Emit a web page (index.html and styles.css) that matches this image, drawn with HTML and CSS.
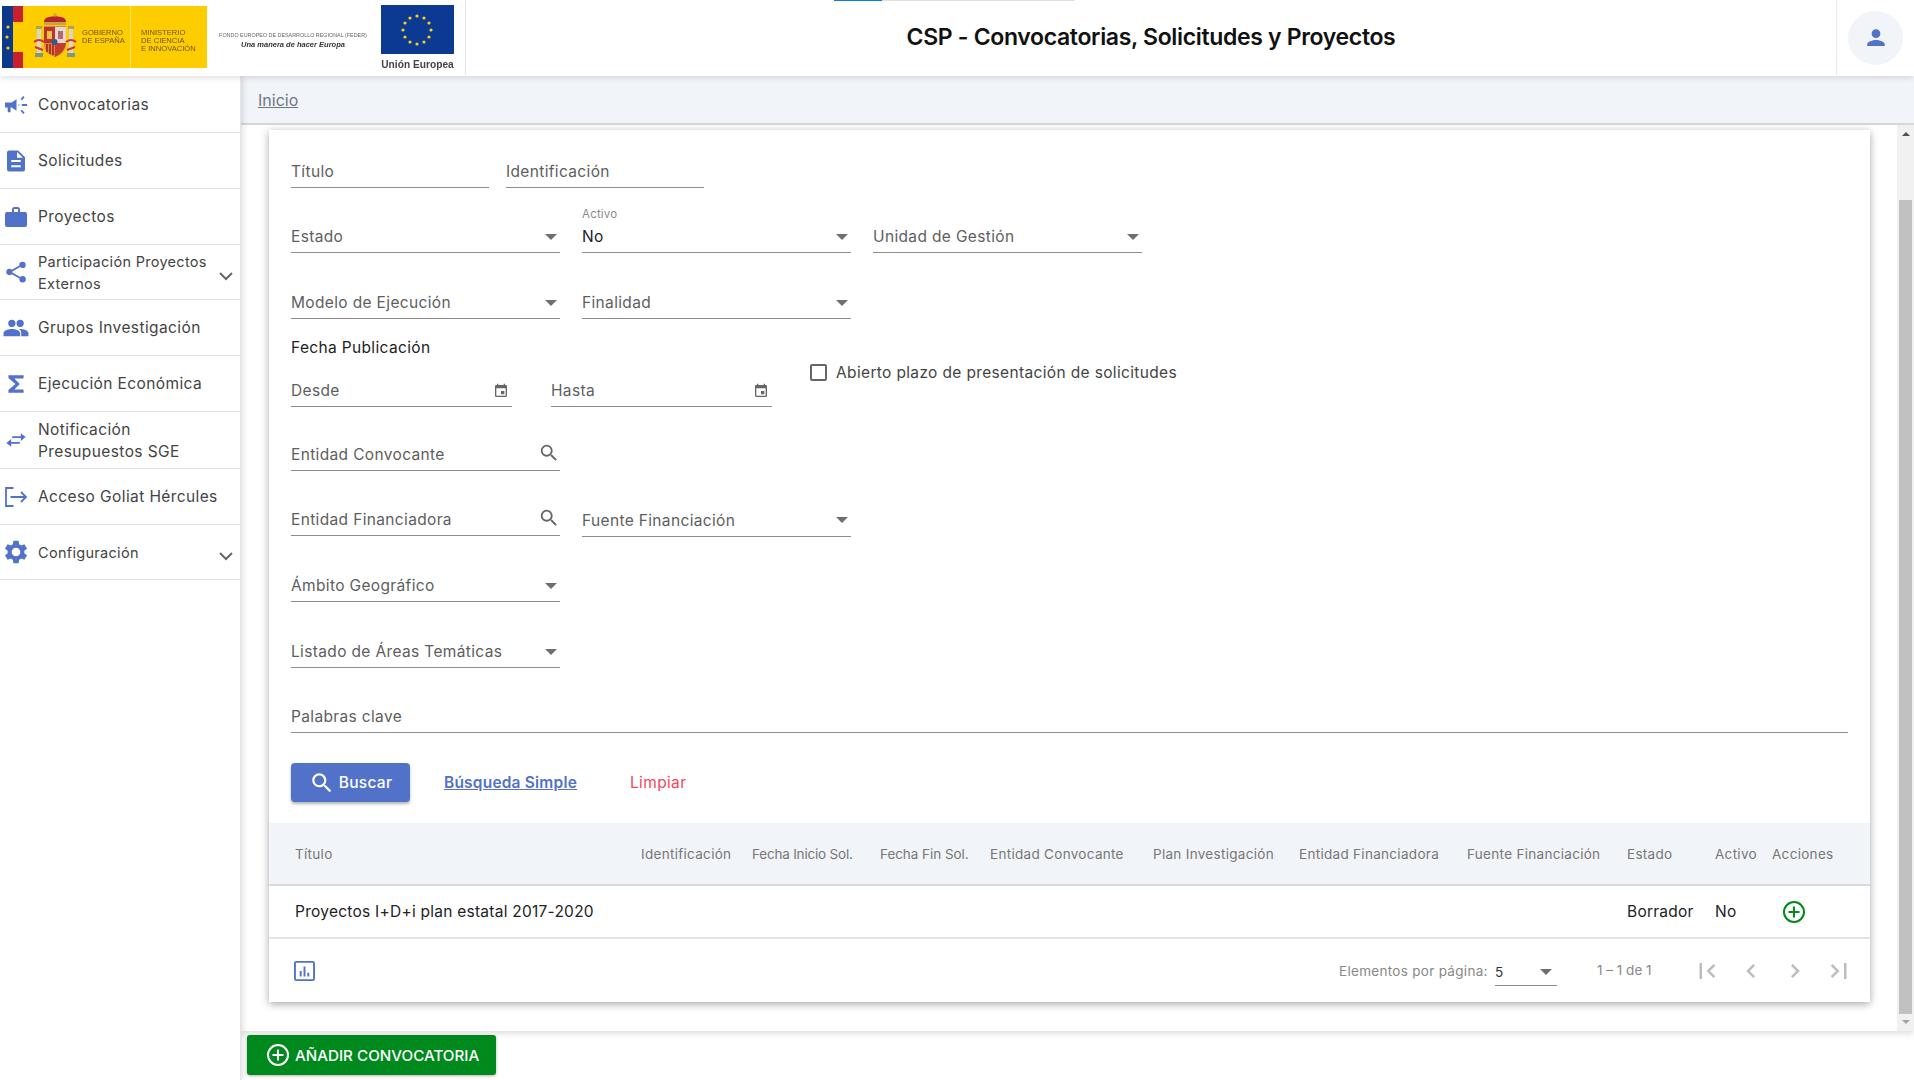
FILE: index.html
```html
<!DOCTYPE html>
<html lang="es">
<head>
<meta charset="utf-8">
<title>CSP</title>
<link rel="stylesheet" href="styles.css">
</head>
<body>
<header class="topbar">
  <div class="progress"><span class="progress-fill"></span></div>
  <div class="logos">
    <svg class="logo-svg" width="465" height="75" viewBox="0 0 465 75">
      <rect x="2" y="6" width="205" height="62" fill="#fecd00"/>
      <rect x="2" y="6" width="11" height="62" fill="#0b3a8c"/>
      <rect x="13" y="6" width="10" height="16" fill="#c8202c"/>
      <rect x="13" y="52" width="10" height="16" fill="#c8202c"/>
      <circle cx="8" cy="27" r="1.6" fill="#fecd00"/><circle cx="7" cy="37" r="1.6" fill="#fecd00"/><circle cx="8" cy="48" r="1.6" fill="#fecd00"/>
      <rect x="130" y="6" width="1" height="62" fill="#ffe271"/>
      <rect x="37" y="29" width="4" height="24" fill="#d5d8cf"/><rect x="69" y="29" width="4" height="24" fill="#d5d8cf"/>
      <rect x="36" y="26" width="6" height="3" fill="#b9a04e"/><rect x="68" y="26" width="6" height="3" fill="#b9a04e"/>
      <rect x="35" y="53" width="8" height="4" fill="#7f9a7a"/><rect x="67" y="53" width="8" height="4" fill="#7f9a7a"/>
      <path d="M44 24q-1-6 5-7l6-1 6 1q6 1 5 7z" fill="#b3262b"/>
      <rect x="44" y="22" width="22" height="3" fill="#c9a24a"/>
      <circle cx="55" cy="15" r="1.800" fill="#c9a24a"/>
      <path d="M44 26h22v19q-1 9-11 12-10-3-11-12z" fill="#d08a3a"/>
      <rect x="55" y="27" width="11" height="16" fill="#e6d6d0"/>
      <rect x="44" y="27" width="11" height="16" fill="#c2322c"/>
      <rect x="47" y="31" width="5" height="8" fill="#e8c24a"/>
      <rect x="58" y="31" width="5" height="8" fill="#b06a70"/>
      <path d="M55 43h11q-1 9-11 14z" fill="#c43c2e"/>
      <path d="M46 44h2v8h-2zm3 0h2v10h-2zm3 0h2v11h-2z" fill="#b8322a"/>
      <circle cx="54.500" cy="42" r="3" fill="#2c5b9c"/>
      <path d="M34 42q5-4 10 0M66 42q5-4 10 0M35 47l8 3M67 50l8-3" stroke="#d2343a" stroke-width="2" fill="none"/>
      <text class="lg-gov" x="82" y="35">GOBIERNO</text>
      <text class="lg-gov" x="82" y="43">DE ESPAÑA</text>
      <text class="lg-gov" x="141" y="35">MINISTERIO</text>
      <text class="lg-gov" x="141" y="43">DE CIENCIA</text>
      <text class="lg-gov" x="141" y="51">E INNOVACIÓN</text>
      <text class="lg-feder" x="293" y="37" text-anchor="middle">FONDO EUROPEO DE DESARROLLO REGIONAL (FEDER)</text>
      <text class="lg-una" x="293" y="47" text-anchor="middle">Una manera de hacer Europa</text>
      <rect x="381" y="5" width="73" height="49" fill="#0c3a92"/>
      <g fill="#f6d21a">
        <circle cx="417" cy="16" r="1.6"/><circle cx="424" cy="18" r="1.6"/><circle cx="429" cy="23" r="1.6"/><circle cx="431" cy="30" r="1.6"/><circle cx="429" cy="37" r="1.6"/><circle cx="424" cy="42" r="1.6"/><circle cx="417" cy="44" r="1.6"/><circle cx="410" cy="42" r="1.6"/><circle cx="405" cy="37" r="1.6"/><circle cx="403" cy="30" r="1.6"/><circle cx="405" cy="23" r="1.6"/><circle cx="410" cy="18" r="1.6"/>
      </g>
      <text class="lg-ue" x="417.5" y="68" text-anchor="middle">Unión Europea</text>
    </svg>
  </div>
  <h1 class="app-title">CSP - Convocatorias, Solicitudes y Proyectos</h1>
  <div class="user-box">
    <span class="avatar">
      <svg width="24" height="24" viewBox="0 0 24 24"><path fill="#5271c9" d="M12 12a4.400 4.400 0 1 0 0-8.800 4.400 4.400 0 0 0 0 8.800zm0 2c-3.200 0-8.800 1.600-8.800 4.500V20h17.600v-1.500c0-2.900-5.600-4.500-8.800-4.500z"/></svg>
    </span>
  </div>
</header>

<div class="shell">
  <nav class="sidebar">
    <a class="nav-item h56">
      <svg class="nav-ico" viewBox="0.1 -0.4 24.8 24.8"><path d="M2 9.500v5h2.500l.2 4.500h2.600v-4.500h1l4.700 3V6.500l-4.700 3z"/><path class="thin" d="M15 12h.6M18 12h5M17.500 7l2.500-3M17.500 17l2.500 3"/></svg>
      <span class="nav-text">Convocatorias</span>
    </a>
    <a class="nav-item h56">
      <svg class="nav-ico" viewBox="-0.25 -0.25 24.5 24.5"><path d="M14 2H5.500a2 2 0 0 0-2 2v16a2 2 0 0 0 2 2h13a2 2 0 0 0 2-2V8.500zm2.500 16h-9v-2h9zm0-5h-9v-2h9zM13 9V3.500L18.500 9z"/></svg>
      <span class="nav-text">Solicitudes</span>
    </a>
    <a class="nav-item h56">
      <svg class="nav-ico" viewBox="-1 -1 26 26"><path d="M21 7h-5V4.500A2.500 2.500 0 0 0 13.500 2h-3A2.500 2.500 0 0 0 8 4.500V7H3a2 2 0 0 0-2 2v11a2 2 0 0 0 2 2h18a2 2 0 0 0 2-2V9a2 2 0 0 0-2-2zm-7 0h-4V4h4z"/></svg>
      <span class="nav-text">Proyectos</span>
    </a>
    <a class="nav-item h55 expandable">
      <svg class="nav-ico" viewBox="-1 -1 26 26"><path d="M18.500 16c-.9 0-1.700.3-2.300.9L8.400 12.600c.1-.2.100-.4.100-.6s0-.4-.1-.6l7.700-4.300c.6.600 1.500 1 2.400 1a3.200 3.200 0 1 0-3.200-3.200c0 .2 0 .4.100.6L7.700 9.800A3.200 3.200 0 1 0 5.300 15.200c.9 0 1.800-.4 2.400-1l7.800 4.400c-.1.200-.1.400-.1.600a3.200 3.200 0 1 0 3.100-3.200z"/></svg>
      <span class="nav-text">Participación Proyectos Externos</span>
      <svg class="nav-chev" width="16" height="16" viewBox="0 0 16 16"><path d="M2 5l6 6 6-6" fill="none" stroke="#666" stroke-width="2"/></svg>
    </a>
    <a class="nav-item h56">
      <svg class="nav-ico" viewBox="-0.5 -0.5 25 25"><path d="M16 11a3.500 3.500 0 1 0 0-7 3.500 3.500 0 0 0 0 7zm-8 0a3.500 3.500 0 1 0 0-7 3.500 3.500 0 0 0 0 7zm0 2c-2.700 0-8 1.300-8 4v3h16v-3c0-2.700-5.300-4-8-4zm8 0h-1c1.200.9 2 2.100 2 4v3h7v-3c0-2.700-5.300-4-8-4z"/></svg>
      <span class="nav-text">Grupos Investigación</span>
    </a>
    <a class="nav-item h56">
      <svg class="nav-ico" viewBox="0 0 24 24"><path d="M19 4H5v2.500l6.500 5.500L5 17.500V20h14v-3h-8.500l5-5-5-5H19z"/></svg>
      <span class="nav-text">Ejecución Económica</span>
    </a>
    <a class="nav-item h57">
      <svg class="nav-ico" viewBox="-1.5 -1.5 27 27"><path d="M7 11l-5 4 5 4v-3h9v-2H7zM22 9l-5-4v3H8v2h9v3z"/></svg>
      <span class="nav-text">Notificación Presupuestos SGE</span>
    </a>
    <a class="nav-item h56">
      <svg class="nav-ico" viewBox="-0.5 -1 26 26"><path class="thin" d="M10 3H2.500v18H10M7 12h15M17.500 7l5 5-5 5"/></svg>
      <span class="nav-text">Acceso Goliat Hércules</span>
    </a>
    <a class="nav-item h55 expandable">
      <svg class="nav-ico" viewBox="2.200 1.500 21 21"><path d="M19.400 13a7.600 7.600 0 0 0 0-2l2.200-1.700-2.100-3.600-2.600 1a7.500 7.500 0 0 0-1.700-1L14.800 3h-4.200l-.4 2.700a7.500 7.500 0 0 0-1.700 1l-2.600-1-2.100 3.600L6 11a7.600 7.600 0 0 0 0 2l-2.200 1.700 2.100 3.600 2.600-1c.5.400 1.100.7 1.700 1l.4 2.700h4.200l.4-2.700c.6-.3 1.200-.6 1.700-1l2.600 1 2.100-3.600zM12.700 15.500a3.500 3.500 0 1 1 0-7 3.500 3.500 0 0 1 0 7z"/></svg>
      <span class="nav-text">Configuración</span>
      <svg class="nav-chev" width="16" height="16" viewBox="0 0 16 16"><path d="M2 5l6 6 6-6" fill="none" stroke="#666" stroke-width="2"/></svg>
    </a>
  </nav>

  <div class="content">
    <div class="crumbs"><a class="crumb-link">Inicio</a></div>
    <div class="scroller">
      <main class="scroll-body">
        <section class="card">
          <form class="filters">
            <div class="row gap17 first">
              <div class="field w198"><span class="ph">Título</span></div>
              <div class="field w198"><span class="ph">Identificación</span></div>
            </div>
            <div class="row">
              <div class="field w269 sel"><span class="ph">Estado</span><i class="caret"></i></div>
              <div class="field w269 sel"><span class="float">Activo</span><span class="val">No</span><i class="caret"></i></div>
              <div class="field w269 sel"><span class="ph">Unidad de Gestión</span><i class="caret"></i></div>
            </div>
            <div class="row m31">
              <div class="field w269 sel"><span class="ph">Modelo de Ejecución</span><i class="caret"></i></div>
              <div class="field w269 sel"><span class="ph">Finalidad</span><i class="caret"></i></div>
            </div>
            <div class="row date-row">
              <div class="date-col">
                <div class="group-label">Fecha Publicación</div>
                <div class="date-fields">
                  <div class="field w221"><span class="ph">Desde</span>
                    <svg class="cal" width="16" height="16" viewBox="0 0 24 24"><path fill="#666" d="M17 12h-5v5h5zM16 1v2H8V1H6v2H5a2 2 0 0 0-2 2v14a2 2 0 0 0 2 2h14a2 2 0 0 0 2-2V5a2 2 0 0 0-2-2h-1V1zm3 18H5V8h14z"/></svg>
                  </div>
                  <div class="field w221"><span class="ph">Hasta</span>
                    <svg class="cal" width="16" height="16" viewBox="0 0 24 24"><path fill="#666" d="M17 12h-5v5h5zM16 1v2H8V1H6v2H5a2 2 0 0 0-2 2v14a2 2 0 0 0 2 2h14a2 2 0 0 0 2-2V5a2 2 0 0 0-2-2h-1V1zm3 18H5V8h14z"/></svg>
                  </div>
                </div>
              </div>
              <label class="check"><span class="box"></span><span>Abierto plazo de presentación de solicitudes</span></label>
            </div>
            <div class="row m29">
              <div class="field w269"><span class="ph">Entidad Convocante</span>
                <svg class="mag" width="22" height="22" viewBox="0 0 24 24"><path fill="#666" d="M15.500 14h-.79l-.28-.27A6.470 6.470 0 0 0 16 9.500 6.500 6.500 0 1 0 9.500 16c1.610 0 3.090-.59 4.230-1.570l.27.28v.79l5 4.990L20.490 19l-4.990-5zm-6 0C7.010 14 5 11.990 5 9.500S7.010 5 9.500 5 14 7.010 14 9.500 11.990 14 9.500 14z"/></svg>
              </div>
            </div>
            <div class="row">
              <div class="field w269"><span class="ph">Entidad Financiadora</span>
                <svg class="mag" width="22" height="22" viewBox="0 0 24 24"><path fill="#666" d="M15.500 14h-.79l-.28-.27A6.470 6.470 0 0 0 16 9.500 6.500 6.500 0 1 0 9.500 16c1.610 0 3.090-.59 4.230-1.570l.27.28v.79l5 4.990L20.490 19l-4.990-5zm-6 0C7.010 14 5 11.990 5 9.500S7.010 5 9.500 5 14 7.010 14 9.500 11.990 14 9.500 14z"/></svg>
              </div>
              <div class="field w269 sel fuente"><span class="ph">Fuente Financiación</span><i class="caret"></i></div>
            </div>
            <div class="row">
              <div class="field w269 sel"><span class="ph">Ámbito Geográfico</span><i class="caret"></i></div>
            </div>
            <div class="row m31">
              <div class="field w269 sel"><span class="ph">Listado de Áreas Temáticas</span><i class="caret"></i></div>
            </div>
            <div class="row">
              <div class="field wfull"><span class="ph">Palabras clave</span></div>
            </div>
            <div class="actions">
              <button class="btn-search" type="button">
                <svg width="26" height="26" viewBox="0 0 24 24"><path fill="#fff" d="M15.500 14h-.79l-.28-.27A6.470 6.470 0 0 0 16 9.500 6.500 6.500 0 1 0 9.500 16c1.610 0 3.090-.59 4.230-1.570l.27.28v.79l5 4.990L20.490 19l-4.990-5zm-6 0C7.010 14 5 11.990 5 9.500S7.010 5 9.500 5 14 7.010 14 9.500 11.990 14 9.500 14z"/></svg>
                <span>Buscar</span>
              </button>
              <a class="link-simple">Búsqueda Simple</a>
              <a class="link-clear">Limpiar</a>
            </div>
          </form>
          <div class="thead tgrid">
            <span>Título</span><span>Identificación</span><span class="tight-a">Fecha Inicio Sol.</span><span class="tight-b">Fecha Fin Sol.</span><span>Entidad Convocante</span><span>Plan Investigación</span><span>Entidad Financiadora</span><span>Fuente Financiación</span><span>Estado</span><span>Activo</span><span>Acciones</span>
          </div>
          <div class="trow tgrid">
            <span>Proyectos I+D+i plan estatal 2017-2020</span><span></span><span></span><span></span><span></span><span></span><span></span><span></span><span>Borrador</span><span>No</span>
            <span class="act"><svg width="24" height="24" viewBox="0 0 24 24"><circle cx="12" cy="12" r="10" fill="none" stroke="#008a1e" stroke-width="2"/><path d="M12 6.500v11M6.500 12h11" stroke="#008a1e" stroke-width="2"/></svg></span>
          </div>
          <div class="tfoot">
            <svg class="chart" width="21" height="20" viewBox="0 0 22 22" preserveAspectRatio="none"><rect x="1" y="1" width="20" height="20" rx="1.500" fill="none" stroke="#5271c9" stroke-width="2"/><path d="M6 11v6h2v-6zM10 6v11h2V6zM14 13v4h2v-4z" fill="#5271c9"/></svg>
            <div class="pager">
              <span class="pg-label">Elementos por página:</span>
              <div class="pg-select"><span>5</span><i class="caret"></i></div>
              <span class="pg-range">1 – 1 de 1</span>
              <svg class="pg-btn" width="24" height="24" viewBox="0 0 24 24"><path d="M4.500 4h2.500v16H4.500zM18.500 5l1.800 1.800L15 12l5.300 5.200-1.800 1.800-7-7z"/></svg>
              <svg class="pg-btn" width="24" height="24" viewBox="0 0 24 24"><path d="M16 6.800 14.200 5l-7 7 7 7 1.800-1.800L10.800 12z"/></svg>
              <svg class="pg-btn" width="24" height="24" viewBox="0 0 24 24"><path d="M8 6.800 9.800 5l7 7-7 7L8 17.200 13.200 12z"/></svg>
              <svg class="pg-btn" width="24" height="24" viewBox="0 0 24 24"><path d="M19.500 4H17v16h2.500zM5.500 5 3.700 6.800 9 12l-5.300 5.200L5.500 19l7-7z"/></svg>
            </div>
          </div>
        </section>
      </main>
      <div class="scrollbar">
        <i class="sb-up"></i>
        <div class="sb-track"><div class="sb-thumb"></div></div>
        <i class="sb-down"></i>
      </div>
    </div>
    <div class="bottom-bar">
      <button class="btn-add" type="button">
        <svg width="24" height="24" viewBox="0 0 24 24"><circle cx="12" cy="12" r="10" fill="none" stroke="#fff" stroke-width="2"/><path d="M12 6.500v11M6.500 12h11" stroke="#fff" stroke-width="2"/></svg>
        <span>AÑADIR CONVOCATORIA</span>
      </button>
    </div>
  </div>
</div>
</body>
</html>
```

FILE: styles.css
```css
* { box-sizing: border-box; }
html, body { margin: 0; padding: 0; height: 100%; overflow: hidden; }
body { font-family: Inter, "Open Sans", sans-serif; color: #333; background: #fff; width: 1914px; height: 1080px; }

.topbar { position: relative; height: 76px; display: flex; align-items: flex-start; background: #fff; box-shadow: 0 2px 6px rgba(0,0,0,.12); z-index: 3; }
.progress { position: absolute; left: 834px; top: 0; width: 241px; height: 1px; background: #e0e0e0; }
.progress-fill { position: absolute; left: 0; top: 0; width: 48px; height: 1px; background: #0a7be0; }
.logos { width: 466px; border-right: 1px solid #e8e8e8; height: 75px; flex: none; }
.logo-svg { display: block; filter: blur(.35px); }
.lg-gov { font: 500 7.600px "Liberation Sans", sans-serif; fill: #6b5410; }
.lg-feder { font: 400 5.400px "Liberation Sans", sans-serif; fill: #666; }
.lg-una { font: italic 700 7.500px "Liberation Sans", sans-serif; fill: #333; }
.lg-ue { font: 700 10.200px "Liberation Sans", sans-serif; fill: #444; }
.app-title { flex: 1; margin: 0; text-align: center; font-size: 23px; font-weight: 600; color: #111; line-height: 74px; letter-spacing: -.33px; }
.user-box { width: 78px; flex: none; border-left: 1px solid #e8e8e8; height: 75px; display: flex; align-items: center; justify-content: center; }
.avatar { width: 55px; height: 54px; border-radius: 50%; background: #f1f4f8; display: flex; align-items: center; justify-content: center; }

.shell { display: flex; height: 1004px; }
.sidebar { width: 241px; flex: none; background: #fff; border-right: 1px solid #e4e4e4; box-shadow: 2px 0 6px rgba(0,0,0,.12); z-index: 2; padding-top: 1px; }
.nav-item { display: flex; align-items: center; border-bottom: 1px solid #e0e0e0; padding-left: 3px; padding-right: 5px; font-size: 15.5px; line-height: 22px; color: #444; letter-spacing: .4px; }
.nav-item.expandable { font-size: 14.5px; letter-spacing: .3px; }
.h55 { height: 55px; }
.h56 { height: 56px; }
.h57 { height: 57px; }
.nav-ico { flex: none; fill: #5271c9; width: 26px; height: 26px; margin-right: 9px; }
.nav-ico .thin { fill: none; stroke: #5271c9; stroke-width: 1.800; }
.nav-text { flex: 1; min-width: 0; max-width: 186px; padding-top: 1px; }
.nav-chev { flex: none; margin-left: -6px; margin-top: 8px; }

.content { flex: 1; min-width: 0; display: flex; flex-direction: column; }
.crumbs { height: 49px; background: #f1f4f8; border-bottom: 2px solid #d8dade; padding: 14px 17px 0; font-size: 16px; color: #6f7787; flex: none; }
.crumb-link { text-decoration: underline; }
.scroller { height: 906px; flex: none; display: flex; background: #fff; box-shadow: 0 3px 6px rgba(0,0,0,.12); position: relative; z-index: 1; }
.scroll-body { flex: 1; min-width: 0; padding: 5px 27px 0 28px; }
.card { background: #fff; box-shadow: 0 2px 8px rgba(0,0,0,.35); height: 872px; }

.filters { padding: 23px 22px 21px; font-size: 15.5px; letter-spacing: .35px; display: flex; flex-direction: column; }
.row { display: flex; gap: 22px; margin-top: 30px; }
.row.first { margin-top: 0; }
.row.gap17 { gap: 17px; }
.row.m31 { margin-top: 31px; }
.row.m29 { margin-top: 29px; }
.date-row { margin-top: 20px; gap: 38px; align-items: center; }
.date-fields { display: flex; gap: 39px; margin-top: 15px; }
.group-label { font-size: 15.5px; color: #222; line-height: 18px; }
.field { position: relative; height: 35px; border-bottom: 1px solid #8c8c8c; display: flex; align-items: center; padding-top: 3px; color: #5c5c5c; }
.w198 { width: 198px; }
.w269 { width: 269px; }
.w221 { width: 221px; }
.wfull { width: 100%; }
.field.fuente { height: 36px; }
.ph { color: #5e5e5e; }
.val { color: #222; }
.float { position: absolute; left: 0; top: -11px; font-size: 11.5px; color: #8a8a8a; letter-spacing: .2px; }
.caret { width: 0; height: 0; border-left: 6px solid transparent; border-right: 6px solid transparent; border-top: 6px solid #6f6f6f; display: block; }
.sel .caret { position: absolute; right: 3px; top: 16px; }
.cal { position: absolute; right: 3px; top: 11px; }
.mag { position: absolute; right: 0; top: 6px; }
.check { display: flex; align-items: center; gap: 9px; color: #444; margin-top: -2px; }
.box { width: 17px; height: 17px; border: 2px solid #666; border-radius: 2px; display: block; flex: none; }

.actions { display: flex; align-items: center; height: 39px; margin-top: 30px; }
.btn-search { width: 119px; height: 39px; border: 0; border-radius: 4px; background: #5271c9; color: #fff; box-shadow: 0 2px 3px rgba(0,0,0,.3); font: 500 15.500px Inter, sans-serif; letter-spacing: .3px; display: flex; align-items: center; justify-content: center; gap: 4px; padding: 0; }
.link-simple { margin-left: 34px; width: 186px; color: #5271c9; font-weight: 600; letter-spacing: .2px; text-decoration: underline; }
.link-clear { color: #f4475c; }

.tgrid { display: grid; grid-template-columns: 346px 111px 128px 110px 163px 146px 168px 160px 88px 57px 1fr; padding-left: 26px; align-items: center; }
.thead { height: 63px; background: #f1f4f8; border-bottom: 2px solid #d8dade; font-size: 13.5px; letter-spacing: .3px; color: #777; white-space: nowrap; }
.tight-a { letter-spacing: -.2px; }
.tight-b { letter-spacing: -.05px; }
.trow { height: 53px; border-bottom: 2px solid #e4e4e4; font-size: 15.5px; letter-spacing: .25px; color: #222; white-space: nowrap; }
.act { padding-left: 10px; height: 24px; }
.tfoot { height: 63px; display: flex; align-items: center; padding: 0 19px 0 25px; }
.pager { margin-left: auto; display: flex; align-items: center; font-size: 13.5px; letter-spacing: .3px; color: #888; }
.pg-label { width: 156px; white-space: nowrap; }
.pg-select { width: 62px; height: 30px; border-bottom: 1px solid #8c8c8c; display: flex; align-items: center; justify-content: space-between; color: #333; padding: 3px 5px 0 0; margin-right: 40px; }
.pg-range { width: 55px; margin-right: 43px; white-space: nowrap; margin-top: -2px; letter-spacing: 0; }
.pg-btn { fill: #bdbdbd; margin-right: 20px; }
.pg-btn:last-child { margin-right: 0; }
.chart { flex: none; }

.scrollbar { width: 17px; flex: none; background: #f1f1f1; display: flex; flex-direction: column; align-items: center; }
.sb-up { width: 0; height: 0; margin-top: 7px; border-left: 4px solid transparent; border-right: 4px solid transparent; border-bottom: 4px solid #505050; }
.sb-track { flex: 1; width: 100%; padding: 64px 2px 6px; }
.sb-thumb { width: 100%; height: 100%; background: #c1c1c1; }
.sb-down { width: 0; height: 0; margin-bottom: 7px; border-left: 4px solid transparent; border-right: 4px solid transparent; border-top: 4px solid #a3a3a3; }

.bottom-bar { flex: 1; padding: 4px 0 0 6px; background: #fff; }
.btn-add { width: 249px; height: 40px; border: 0; border-radius: 3px; background: #008a1e; color: #fff; box-shadow: 0 1px 3px rgba(0,0,0,.3); font: 500 15.200px Inter, sans-serif; display: flex; align-items: center; gap: 5px; padding: 0 0 0 19px; white-space: nowrap; }
```
